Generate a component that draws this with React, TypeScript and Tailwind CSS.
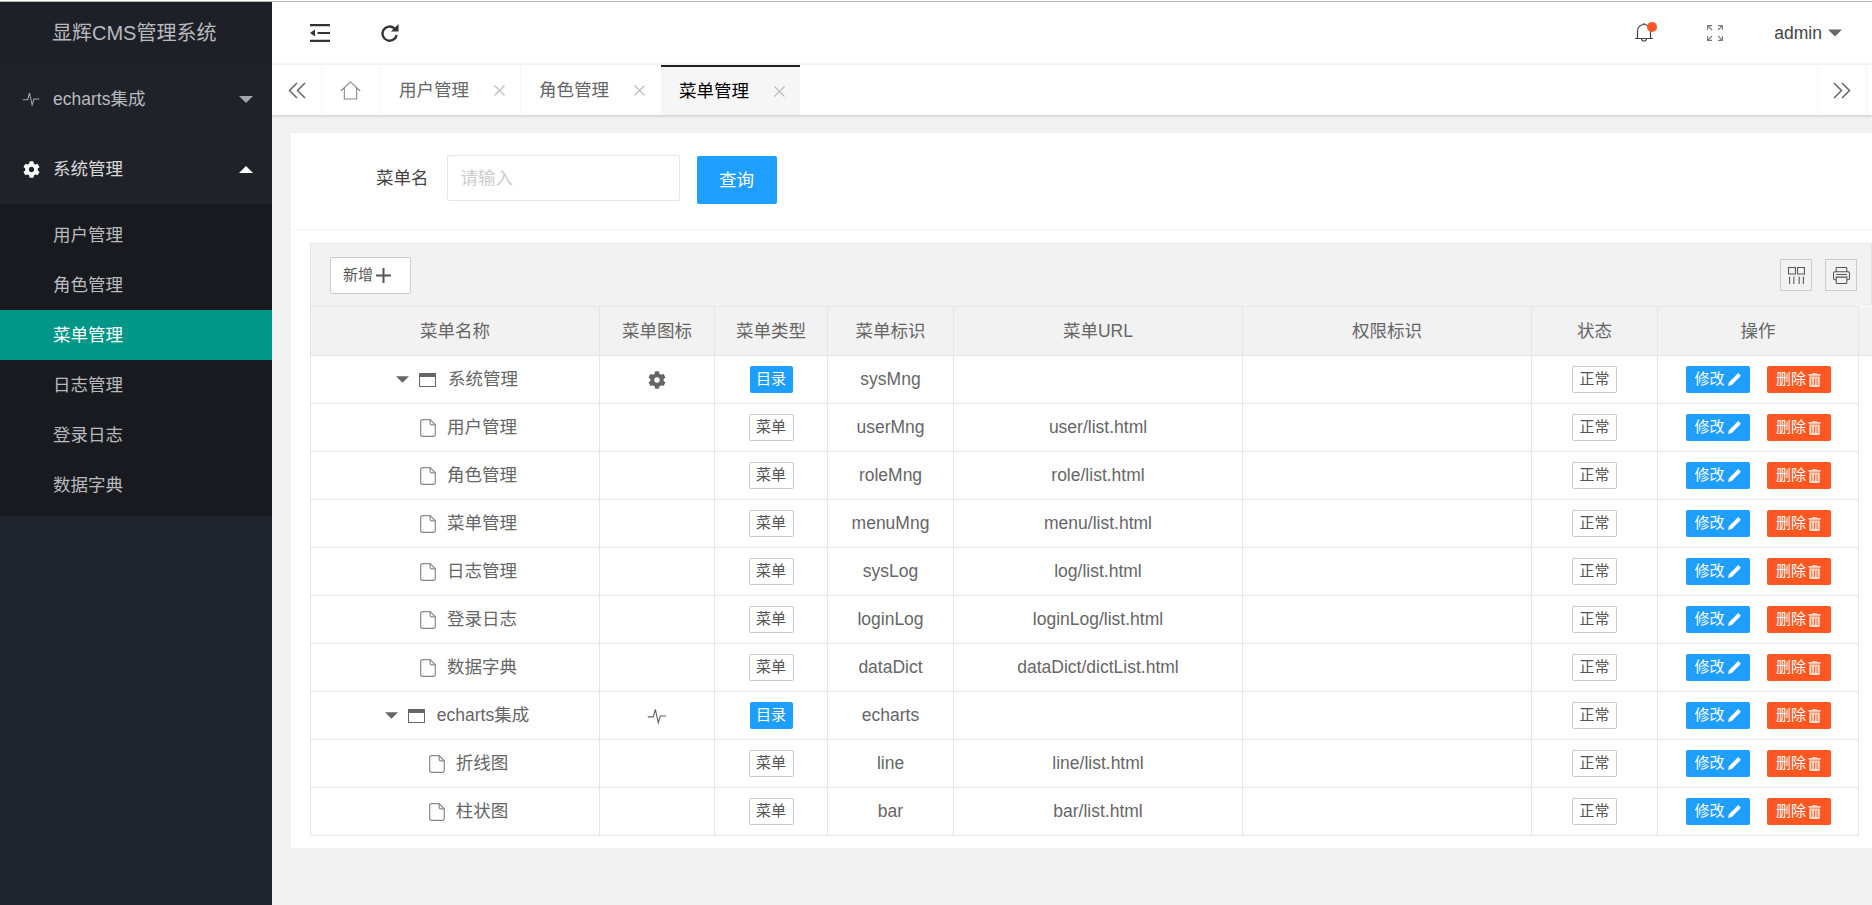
import { FaCog, FaTrashAlt } from "react-icons/fa";

type MenuRow = {
    name: string;
    dir?: boolean;
    icon?: "cog" | "pulse";
    code: string;
    url?: string;
};

const rows: MenuRow[] = [
    { name: "系统管理", dir: true, icon: "cog", code: "sysMng" },
    { name: "用户管理", code: "userMng", url: "user/list.html" },
    { name: "角色管理", code: "roleMng", url: "role/list.html" },
    { name: "菜单管理", code: "menuMng", url: "menu/list.html" },
    { name: "日志管理", code: "sysLog", url: "log/list.html" },
    { name: "登录日志", code: "loginLog", url: "loginLog/list.html" },
    { name: "数据字典", code: "dataDict", url: "dataDict/dictList.html" },
    { name: "echarts集成", dir: true, icon: "pulse", code: "echarts" },
    { name: "折线图", code: "line", url: "line/list.html" },
    { name: "柱状图", code: "bar", url: "bar/list.html" },
];

const subMenus = ["用户管理", "角色管理", "菜单管理", "日志管理", "登录日志", "数据字典"];
const columns = ["菜单名称", "菜单图标", "菜单类型", "菜单标识", "菜单URL", "权限标识", "状态", "操作"];

function Pulse({ className }: { className?: string }) {
    return (
        <svg viewBox="0 0 24 24" className={className} fill="none" stroke="currentColor" strokeWidth="1.4">
            <path d="M1 13h6.5l2.5-9 3.5 16 2.5-8h7" />
        </svg>
    );
}

function Caret({ up, className }: { up?: boolean; className?: string }) {
    return (
        <svg viewBox="0 0 14 7" className={className} fill="currentColor">
            <path d={up ? "M0 7 7 0l7 7z" : "M0 0h14L7 7z"} />
        </svg>
    );
}

function DoubleChevron({ right }: { right?: boolean }) {
    return (
        <svg viewBox="0 0 18 16" className="h-[17px] w-[18px] text-[#666]" fill="none" stroke="currentColor" strokeWidth="1.5">
            <path d={right ? "M1 .5 8.5 8 1 15.5M9 .5 16.5 8 9 15.5" : "M17 .5 9.500 8 17 15.5M9 .5 1.500 8 9 15.5"} />
        </svg>
    );
}

function CloseX() {
    return (
        <svg viewBox="0 0 11 11" className="h-[11px] w-[11px] text-[#bbb]" fill="none" stroke="currentColor" strokeWidth="1.1">
            <path d="m.5.500 10 10M10.500.500l-10 10" />
        </svg>
    );
}

function FileIcon() {
    return (
        <svg viewBox="0 0 15 17" className="h-[18px] w-[16px] text-[#888]" fill="none" stroke="currentColor" strokeWidth="1.1">
            <path d="M2.500.6h7l4.900 4.900v9a1.900 1.900 0 0 1-1.900 1.900h-10a1.900 1.900 0 0 1-1.900-1.900v-12A1.900 1.900 0 0 1 2.500.6z" />
            <path d="M9.500.6v3.400a1.500 1.500 0 0 0 1.500 1.500h3.400" />
        </svg>
    );
}

function WindowIcon() {
    return (
        <svg viewBox="0 0 17 14" className="h-[14px] w-[17px] text-[#666]" fill="none" stroke="currentColor">
            <rect x=".5" y=".5" width="16" height="13" strokeWidth="1" />
            <rect x="0" y="0" width="17" height="4" fill="currentColor" stroke="none" />
        </svg>
    );
}

function PenIcon() {
    return (
        <svg viewBox="0 0 13 13" className="h-[13px] w-[13px]" fill="currentColor">
            <path d="M0 13l1-3.800L9.500.700a1 1 0 0 1 1.400 0l1.400 1.400a1 1 0 0 1 0 1.400L3.800 12z" />
        </svg>
    );
}

function TopButton({ children }: { children: React.ReactNode }) {
    return <div className="flex h-[32px] w-[32px] items-center justify-center border border-[#ccc]">{children}</div>;
}

export default function App() {
    return (
        <div className="flex h-screen w-full flex-col overflow-hidden bg-[#f2f2f2] [font-family:'Liberation_Sans','Noto_Sans_CJK_SC',sans-serif]">
            <div className="h-[2px] shrink-0 border-b border-[#b4b4b4] bg-white" />
            <div className="flex min-h-0 flex-1">
                {/* Sidebar */}
                <aside className="w-[272px] shrink-0 bg-[#20242c] text-[17.5px] text-[#b9babd]">
                    <div className="flex h-[62px] items-center bg-[#1e2027] pl-[52px] text-[20px]">显辉CMS管理系统</div>
                    <div className="flex h-[70px] items-center bg-[#20222a] pl-[22px] pr-[19px]">
                        <Pulse className="h-[18px] w-[18px] text-[#a5a6a9]" />
                        <span className="ml-[13px] flex-1">echarts集成</span>
                        <Caret className="h-[7px] w-[14px] text-[#a5a6a9]" />
                    </div>
                    <div className="flex h-[70px] items-center bg-[#20222a] pl-[23px] pr-[19px] text-white">
                        <FaCog className="h-[17px] w-[17px]" />
                        <span className="ml-[13px] flex-1 text-[#d9d9da]">系统管理</span>
                        <Caret up className="h-[7px] w-[14px]" />
                    </div>
                    <div className="bg-[#181a20] pb-[6px] pt-[6px]">
                        {subMenus.map((m, i) => (
                            <div
                                key={m}
                                className={
                                    i === 2
                                        ? "flex h-[50px] items-center bg-[#009688] pl-[53px] text-white"
                                        : "flex h-[50px] items-center pl-[53px]"
                                }
                            >
                                {m}
                            </div>
                        ))}
                    </div>
                </aside>

                <main className="min-w-0 flex-1 overflow-hidden">
                    {/* Top bar */}
                    <div className="flex h-[62px] items-center bg-white pl-[38px] pr-[30px]">
                        <svg viewBox="0 0 20 18" className="h-[18px] w-[20px] text-[#333]" fill="currentColor">
                            <path d="M0 0h20v2.200H0zM0 15.800h20V18H0zM7.500 7.900H20v2.200H7.500zM0 9l5-3.500v7z" />
                        </svg>
                        <svg viewBox="0 0 20 20" className="ml-[50px] h-[19px] w-[19px] text-[#333]" fill="none" stroke="currentColor" strokeWidth="2.500">
                            <path d="M17.500 11.500a7.500 7.500 0 1 1-2.400-7" />
                            <path d="M11.500 8H19.500V0z" fill="currentColor" stroke="none" />
                        </svg>
                        <div className="relative ml-auto h-[20px] w-[18px]">
                            <svg viewBox="0 0 18 20" className="h-[20px] w-[18px] text-[#444]" fill="none" stroke="currentColor" strokeWidth="1.200">
                                <path d="M0 15.500h18M2.500 15.500V8a6.500 6.500 0 0 1 13 0v7.500M9 1.500V0M6.500 15.500a2.500 2.500 0 0 0 5 0" />
                            </svg>
                            <span className="absolute left-[12px] top-[-1px] h-[10px] w-[10px] rounded-full bg-[#ff5722]" />
                        </div>
                        <svg viewBox="0 0 16 16" className="ml-[54px] h-[16px] w-[16px] text-[#777]" fill="none" stroke="currentColor" strokeWidth="1.100">
                            <path d="M.6 5V.6H5M.6.600l4.400 4.400M15.400 5V.6H11M15.400.600 11 5M.6 11v4.400H5M.6 15.400 5 11M15.400 11v4.400H11M15.400 15.400 11 11" />
                        </svg>
                        <span className="ml-[51px] text-[17.5px] text-[#444]">admin</span>
                        <Caret className="ml-[6px] h-[8px] w-[14px] text-[#666]" />
                    </div>

                    {/* Tabs */}
                    <div className="flex h-[51px] items-stretch border-t border-[#f2f2f2] bg-white text-[17.5px] text-[#666] shadow-[0_1px_3px_rgba(0,0,0,0.18)]">
                        <div className="flex w-[50px] items-center justify-center border-r border-[#f6f6f6]">
                            <DoubleChevron />
                        </div>
                        <div className="flex w-[58px] items-center justify-center border-r border-[#f6f6f6]">
                            <svg viewBox="0 0 22 20" className="h-[19px] w-[21px] text-[#888]" fill="none" stroke="currentColor" strokeWidth="1.200">
                                <path d="M.8 10.500 11 1l10.200 9.500M4.500 8v11h13V8" />
                            </svg>
                        </div>
                        <div className="flex w-[141px] items-center border-r border-[#f6f6f6] pl-[19px]">
                            <span>用户管理</span>
                            <span className="ml-[25px]"><CloseX /></span>
                        </div>
                        <div className="flex w-[140px] items-center pl-[18px]">
                            <span>角色管理</span>
                            <span className="ml-[25px]"><CloseX /></span>
                        </div>
                        <div className="flex w-[139px] items-center border-t-2 border-[#222] bg-[#f6f6f6] pl-[18px] text-black">
                            <span>菜单管理</span>
                            <span className="ml-[25px]"><CloseX /></span>
                        </div>
                        <div className="ml-auto mr-[5px] flex w-[50px] items-center justify-center border-x border-[#f6f6f6]">
                            <DoubleChevron right />
                        </div>
                    </div>

                    {/* Content card */}
                    <div className="pl-[19px] pt-[18px]">
                        <div className="bg-white pb-[12px]">
                            <div className="flex h-[97px] items-start border-b border-[#f6f6f6] pl-[85px] pt-[22px] text-[17.5px]">
                                <span className="leading-[46px] text-[#444]">菜单名</span>
                                <input
                                    placeholder="请输入"
                                    className="ml-[18px] h-[46px] w-[233px] rounded-[2px] border border-[#e6e6e6] px-[13px] outline-none placeholder:text-[#ccc]"
                                />
                                <button className="ml-[17px] mt-px h-[48px] w-[80px] rounded-[2px] bg-[#1e9fff] text-white">查询</button>
                            </div>

                            <div className="pl-[19px] pt-[13px]">
                                <div className="flex h-[63px] items-center border border-b-0 border-[#e6e6e6] bg-[#f2f2f2] pl-[19px]">
                                    <button className="flex h-[37px] w-[81px] items-center rounded-[2px] border border-[#ccc] bg-white pl-[12px] text-[15px] text-[#555]">
                                        新增
                                        <svg viewBox="0 0 15 15" className="ml-[3px] h-[15px] w-[15px] text-[#555]" fill="none" stroke="currentColor" strokeWidth="2">
                                            <path d="M7.500 0v15M0 7.500h15" />
                                        </svg>
                                    </button>
                                    <div className="ml-auto flex gap-[13px] pr-[14px]">
                                        <TopButton>
                                            <svg viewBox="0 0 16 16" className="h-[17px] w-[17px] text-[#555]" fill="none" stroke="currentColor" strokeWidth="1">
                                                <path d="M.5.500h6.500v6H.5zM9 .5h6.500v6H9zM1.500 9v7M5.500 9v7M10.500 9v7M14.500 9v7" />
                                            </svg>
                                        </TopButton>
                                        <TopButton>
                                            <svg viewBox="0 0 16 16" className="h-[17px] w-[17px] text-[#555]" fill="none" stroke="currentColor" strokeWidth="1">
                                                <path d="M3 4.500V1.200a.7.700 0 0 1 .7-.7h8.600a.7.700 0 0 1 .7.700v3.300M3 12H1.800a1.300 1.300 0 0 1-1.300-1.300V5.800a1.300 1.300 0 0 1 1.300-1.300h12.400a1.300 1.300 0 0 1 1.300 1.300v4.900a1.300 1.300 0 0 1-1.300 1.300H13M3 9.500h10v5.300a.7.700 0 0 1-.7.700H3.700a.7.700 0 0 1-.7-.7zM3 7h10" />
                                            </svg>
                                        </TopButton>
                                    </div>
                                </div>

                                <table className="w-[1562px] table-fixed border-collapse text-center text-[17.5px] text-[#666]">
                                    <colgroup>
                                        <col className="w-[289px]" />
                                        <col className="w-[115px]" />
                                        <col className="w-[113px]" />
                                        <col className="w-[126px]" />
                                        <col className="w-[289px]" />
                                        <col className="w-[289px]" />
                                        <col className="w-[126px]" />
                                        <col className="w-[201px]" />
                                        <col className="w-[14px]" />
                                    </colgroup>
                                    <thead>
                                        <tr className="h-[49px] bg-[#f2f2f2]">
                                            {columns.map((c) => (
                                                <th key={c} className="border border-[#e6e6e6] p-0 font-normal">
                                                    {c}
                                                </th>
                                            ))}
                                            <th className="border-b border-[#e6e6e6] p-0" />
                                        </tr>
                                    </thead>
                                    <tbody>
                                        {rows.map((row) => (
                                            <tr key={row.code} className="h-[48px]">
                                                <td className="border border-[#e6e6e6] p-0">
                                                    <div className="flex items-center justify-center pl-[4px]">
                                                        {row.dir ? (
                                                            <Caret className="mr-[10px] h-[7px] w-[13px] text-[#666]" />
                                                        ) : (
                                                            <span className="mr-[10px] w-[13px]" />
                                                        )}
                                                        {row.dir ? <WindowIcon /> : <FileIcon />}
                                                        <span className={row.dir ? "ml-[12px]" : "ml-[11px]"}>{row.name}</span>
                                                    </div>
                                                </td>
                                                <td className="border border-[#e6e6e6] p-0">
                                                    <div className="flex justify-center">
                                                        {row.icon === "cog" && <FaCog className="h-[18px] w-[18px] text-[#666]" />}
                                                        {row.icon === "pulse" && <Pulse className="h-[20px] w-[20px] text-[#666]" />}
                                                    </div>
                                                </td>
                                                <td className="border border-[#e6e6e6] p-0">
                                                    <div className="flex justify-center">
                                                        {row.dir ? (
                                                            <span className="flex h-[27px] w-[43px] items-center justify-center rounded-[2px] bg-[#1e9fff] text-[15px] text-white">
                                                                目录
                                                            </span>
                                                        ) : (
                                                            <span className="flex h-[27px] w-[45px] items-center justify-center rounded-[2px] border border-[#c9c9c9] text-[15px] text-[#555]">
                                                                菜单
                                                            </span>
                                                        )}
                                                    </div>
                                                </td>
                                                <td className="border border-[#e6e6e6] p-0">{row.code}</td>
                                                <td className="border border-[#e6e6e6] p-0">{row.url}</td>
                                                <td className="border border-[#e6e6e6] p-0" />
                                                <td className="border border-[#e6e6e6] p-0">
                                                    <div className="flex justify-center">
                                                        <span className="flex h-[27px] w-[45px] items-center justify-center rounded-[2px] border border-[#c9c9c9] text-[15px] text-[#555]">
                                                            正常
                                                        </span>
                                                    </div>
                                                </td>
                                                <td className="border border-[#e6e6e6] p-0">
                                                    <div className="flex justify-center gap-[17px] text-[15px] text-white">
                                                        <span className="flex h-[27px] w-[64px] items-center justify-center gap-[3px] rounded-[2px] bg-[#1e9fff]">
                                                            修改
                                                            <PenIcon />
                                                        </span>
                                                        <span className="flex h-[27px] w-[64px] items-center justify-center gap-[2px] rounded-[2px] bg-[#ff5722]">
                                                            删除
                                                            <FaTrashAlt className="h-[14px] w-[13px] text-[#ffd9cc]" />
                                                        </span>
                                                    </div>
                                                </td>
                                            </tr>
                                        ))}
                                    </tbody>
                                </table>
                            </div>
                        </div>
                    </div>
                </main>
            </div>
        </div>
    );
}
